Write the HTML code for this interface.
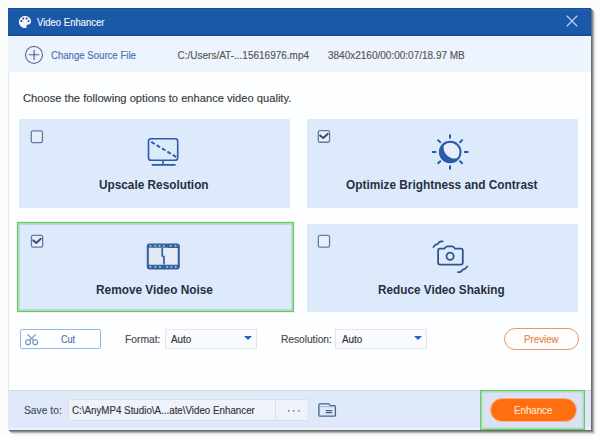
<!DOCTYPE html>
<html><head><meta charset="utf-8">
<style>
*{box-sizing:border-box;margin:0;padding:0}
html,body{width:600px;height:438px;overflow:hidden;background:#fcfcfb;font-family:"Liberation Sans",sans-serif}
.a{position:absolute}
.t{position:absolute;white-space:nowrap;transform-origin:0 0;line-height:1;-webkit-text-stroke:0.15px currentColor}
#win{position:absolute;left:8px;top:8px;width:583px;height:422px;background:#fdfeff;box-shadow:1px 1px 0 #6c6c6c,2px 2px 0 #8c8c8c,3px 3px 1px #b8b8b8,4px 4px 2px #dedede;border-left:1px solid #e8e8e8}
#title{left:8px;top:8px;width:583px;height:28px;background:linear-gradient(#234c88 0,#234c88 1px,#1860b2 1px,#1a5aab 4px,#1a58a8 8px,#1a58a8 26px,#134893 27px,#134893 28px)}
#src{left:8px;top:36px;width:583px;height:35.7px;background:#eef4fd}
.card{position:absolute;background:#ddeafc;width:271px;height:89px}
.chk{position:absolute;width:12px;height:12px;border:1.5px solid #6f8cc4;border-radius:1.5px;background:#e9f0fc}
.cap{position:absolute;transform-origin:0 0;font-weight:bold;font-size:12px;color:#27303f;white-space:nowrap;line-height:1}
.lbl{color:#444;font-size:11px}
.dd{position:absolute;height:20px;background:linear-gradient(#fbfcfe,#f5f8fc);border:1px solid #e1e6ed;box-shadow:inset 0 0 0 1px #f9fbfd}
.tri{position:absolute;width:0;height:0;border-left:4.2px solid transparent;border-right:4.2px solid transparent;border-top:4.3px solid #2462bf}
#foot{left:8px;top:390px;width:583px;height:40px;background:linear-gradient(#cfd8e4 0,#cfd8e4 1px,#e0e9f8 1px,#dfe9f9 38px,#e8f2fc 38px)}
</style></head><body>
<div id="win"></div>
<div class="a" id="title"></div>
<!-- palette icon -->
<svg class="a" style="left:14px;top:12px" width="22" height="20" viewBox="14 12 22 20">
<path d="M25 16C28.6 16 31.1 18.5 31.1 21.6C31.1 23.6 29.8 24.6 28.2 24.4C27 24.3 26.2 25 26.6 26.2C27 27.3 26.3 28 25 28C21.6 28 18.9 25.3 18.9 22C18.9 18.7 21.6 16 25 16Z" fill="#f3f6fb"/>
<g fill="#203f78"><circle cx="21.4" cy="21" r="1"/><circle cx="23.3" cy="18.5" r="1"/><circle cx="26.6" cy="18.5" r="1"/><circle cx="28.5" cy="21" r="1"/></g>
</svg>
<div class="t" style="left:37px;top:17.5px;font-size:10px;color:#f2f6fc;transform:scaleX(0.951)">Video Enhancer</div>
<svg class="a" style="left:566px;top:15px" width="12" height="12" viewBox="0 0 12 12"><path d="M0.8 0.8L11.2 11.2M11.2 0.8L0.8 11.2" stroke="#b8d0f2" stroke-width="1.25"/></svg>

<div class="a" id="src"></div>
<svg class="a" style="left:24px;top:45px" width="20" height="20" viewBox="0 0 20 20"><circle cx="10" cy="9.9" r="8.5" fill="none" stroke="#566e98" stroke-width="1.2"/><path d="M10.1 4.9v10.1M4.9 9.7h10.3" stroke="#4a6290" stroke-width="1.15"/></svg>
<div class="t" style="left:51.3px;top:51px;font-size:10px;color:#4a6fae;transform:scaleX(0.96)">Change Source File</div>
<div class="t" style="left:177.5px;top:51px;font-size:10px;color:#555;transform:scaleX(1.0)">C:/Users/AT-...15616976.mp4</div>
<div class="t" style="left:328px;top:51px;font-size:10px;color:#555;transform:scaleX(1.0)">3840x2160/00:00:07/18.97 MB</div>

<div class="t" style="left:23px;top:92.8px;font-size:11.5px;color:#3a3a3a;transform:scaleX(0.97)">Choose the following options to enhance video quality.</div>

<!-- cards -->
<div class="card" style="left:19px;top:119px"></div>
<div class="card" style="left:307px;top:119px"></div>
<div class="card" style="left:19px;top:224px;height:86px;width:273px"></div>
<div class="a" style="left:17px;top:222px;width:277px;height:90px;border:1px solid #6fc46f;box-shadow:inset 0 0 0 1px #98ec98,inset 0 0 0 2px #c6d0e6,0 0 0 1px #f1f1f1"></div>
<div class="card" style="left:307px;top:224px;height:88px"></div>

<svg class="a" style="left:0;top:0" width="600" height="438" viewBox="0 0 600 438" pointer-events="none"><rect x="31.25" y="130.95" width="11.2" height="11.7" rx="1.6" fill="#e9eff9" stroke="#6a77a0" stroke-width="1.3"/><rect x="318.35" y="130.55" width="11.2" height="11.7" rx="1.6" fill="#e9eff9" stroke="#6a77a0" stroke-width="1.3"/><path d="M320.10 135.40L323.20 138.00L327.70 133.90" fill="none" stroke="#3a4d80" stroke-width="2" stroke-linecap="round" stroke-linejoin="round"/><rect x="31.45" y="235.45" width="11.2" height="11.7" rx="1.6" fill="#e9eff9" stroke="#6a77a0" stroke-width="1.3"/><path d="M33.20 240.30L36.30 242.90L40.80 238.80" fill="none" stroke="#3a4d80" stroke-width="2" stroke-linecap="round" stroke-linejoin="round"/><rect x="318.35" y="235.45" width="11.2" height="11.7" rx="1.6" fill="#e9eff9" stroke="#6a77a0" stroke-width="1.3"/></svg>
<!-- monitor icon -->
<svg class="a" style="left:140px;top:130px" width="45" height="40" viewBox="140 130 45 40">
<rect x="148.5" y="138.7" width="29.2" height="21.6" rx="2.6" fill="none" stroke="#2b5ba8" stroke-width="1.6"/>
<path d="M151.3 141.9L176.2 157" stroke="#2b5ba8" stroke-width="1.9" stroke-dasharray="4 2.27"/>
<path d="M163 160.5v4M151.8 164.9H175.6" stroke="#2b5ba8" stroke-width="1.6"/>
</svg>
<div class="cap" style="left:99.4px;top:179px;transform:scaleX(0.984)">Upscale Resolution</div>

<!-- sun icon -->
<svg class="a" style="left:425px;top:127px" width="50" height="50" viewBox="425 127 50 50">
<defs><clipPath id="ci"><circle cx="450.2" cy="152" r="9.3"/></clipPath></defs>
<g stroke="#2b5ba8" stroke-width="2" stroke-linecap="butt">
<path d="M450 134.5v4M450 165.5v4M432 152h4.3M464 152h4.5M437.6 139.6l3.2 3.1M462.7 139.6l-3.2 3.1M437.6 163.8l3.2-3.1M462.7 163.8l-3.2-3.1"/>
</g>
<circle cx="450.2" cy="152" r="11.3" fill="#2b5ba8"/>
<circle cx="455" cy="147.2" r="11.4" fill="#e6eefb" clip-path="url(#ci)"/>
</svg>
<div class="cap" style="left:346px;top:178.8px;transform:scaleX(0.987)">Optimize Brightness and Contrast</div>

<!-- film icon -->
<svg class="a" style="left:140px;top:238px" width="45" height="36" viewBox="140 238 45 36">
<rect x="148.5" y="247" width="29.5" height="18" fill="#e4e8f0"/>
<rect x="163.5" y="247" width="14.5" height="18" fill="#e7edf8"/>
<g fill="#33609f">
<path d="M146.8 246a2.6 2.6 0 0 1 2.6-2.6H170v4.3H146.8z"/>
<path d="M168.3 246a2.6 2.6 0 0 1 2.6-2.6h6.3a2.6 2.6 0 0 1 2.6 2.6v1.9h-11.5z"/>
<rect x="146.8" y="247" width="2" height="19"/>
<rect x="177.7" y="247" width="2.1" height="19"/>
<path d="M146.8 264.8H179.8v2a2.6 2.6 0 0 1-2.6 2.6H149.4a2.6 2.6 0 0 1-2.6-2.6z"/>
<path d="M161.4 248h1.7v7.6l1.7 0.4v8.6h-1.7v-7.6l-1.7-0.4z"/>
</g>
<g fill="#dbe5f6">
<rect x="149.4" y="245.2" width="2" height="1.3" rx=".6"/><rect x="154.3" y="245.2" width="2" height="1.3" rx=".6"/><rect x="158.5" y="245.2" width="2" height="1.3" rx=".6"/><rect x="162.8" y="245.2" width="2" height="1.3" rx=".6"/><rect x="169.6" y="245.2" width="2" height="1.3" rx=".6"/><rect x="174.6" y="245.2" width="2" height="1.3" rx=".6"/>
<rect x="149.4" y="266.2" width="2" height="1.3" rx=".6"/><rect x="154.3" y="266.2" width="2" height="1.3" rx=".6"/><rect x="159" y="266.2" width="2" height="1.3" rx=".6"/><rect x="166" y="266.2" width="2" height="1.3" rx=".6"/><rect x="170.3" y="266.2" width="2" height="1.3" rx=".6"/><rect x="174.6" y="266.2" width="2" height="1.3" rx=".6"/>
</g>
</svg>
<div class="cap" style="left:96.2px;top:283.8px;transform:scaleX(0.987)">Remove Video Noise</div>

<!-- camera icon -->
<svg class="a" style="left:425px;top:235px" width="50" height="42" viewBox="425 235 50 42">
<g fill="none" stroke="#31558f" stroke-width="1.8" stroke-linecap="round" stroke-linejoin="round">
<path d="M441 248.6h3.4c.8-1.6 1.6-2.3 3-2.3h4.6c1.4 0 2.2.7 3 2.3h5.8c1.3 0 2 .8 2 2v11.9c0 1.3-.7 2.1-2 2.1H440.1c-1.3 0-2-.8-2-2.1v-11.9c0-1.2.7-2 2-2z"/>
<circle cx="450.1" cy="256.2" r="3.6"/>
<path d="M433.4 247L435.4 244.9Q436.2 244.2 437.2 244.2Q437.9 244.1 438.9 242.6Q439.7 241.6 440.8 241.5L442.7 241.4"/>
<path d="M467.3 266.5L465.3 268.6Q464.5 269.3 463.5 269.3Q462.8 269.4 461.8 270.9Q461 271.9 459.9 272L458 272.1"/>
</g>
</svg>
<div class="cap" style="left:378px;top:283.8px;transform:scaleX(0.98)">Reduce Video Shaking</div>

<!-- controls row -->
<div class="a" style="left:19.5px;top:329px;width:81.5px;height:20px;border:1px solid #93bbe6;border-radius:2px;background:#fdfeff"></div>
<svg class="a" style="left:20px;top:330px" width="22" height="18" viewBox="20 330 22 18"><g fill="none" stroke="#6d8ebb" stroke-width="1.1"><circle cx="28.1" cy="342.2" r="2.4"/><circle cx="35.2" cy="342.2" r="2.4"/><path d="M29.6 340.3L35.8 334.4M33.7 340.3L27.4 334.4"/></g></svg>
<div class="t" style="left:60.8px;top:334.8px;font-size:10px;color:#4d6fa8;transform:scaleX(0.906)">Cut</div>

<div class="t" style="left:124.5px;top:334.8px;font-size:10px;color:#4a4a4a;transform:scaleX(1.03)">Format:</div>
<div class="dd" style="left:165px;top:328.8px;width:92px"></div>
<div class="t" style="left:171.3px;top:334.8px;font-size:10px;color:#333;transform:scaleX(0.985)">Auto</div>
<div class="tri" style="left:244px;top:336.3px"></div>

<div class="t" style="left:280.8px;top:334.8px;font-size:10px;color:#4a4a4a;transform:scaleX(1.015)">Resolution:</div>
<div class="dd" style="left:335px;top:328.8px;width:92px"></div>
<div class="t" style="left:342.2px;top:334.8px;font-size:10px;color:#333;transform:scaleX(0.985)">Auto</div>
<div class="tri" style="left:414.3px;top:336.3px"></div>

<div class="a" style="left:504px;top:328px;width:75px;height:22px;border:1.2px solid #eb9a66;border-radius:11px;background:#fffdfb"></div>
<div class="t" style="left:523.8px;top:335px;font-size:10px;color:#e8864a;transform:scaleX(0.974)">Preview</div>

<!-- footer -->
<div class="a" id="foot"></div>
<div class="t" style="left:23.5px;top:405.5px;font-size:10px;color:#4a4f58;transform:scaleX(1.029)">Save to:</div>
<div class="a" style="left:68px;top:399px;width:241px;height:22px;background:#eef3fb;border:1px solid #d6dfeb;border-radius:2px"></div>
<div class="a" style="left:275px;top:400px;width:1px;height:20px;background:#d6dfeb"></div>
<div class="t" style="left:72.4px;top:405.6px;font-size:10px;color:#333;transform:scaleX(0.977)">C:\AnyMP4 Studio\A...ate\Video Enhancer</div>
<svg class="a" style="left:286px;top:408px" width="16" height="6" viewBox="0 0 16 6"><g fill="#6a707a"><circle cx="2.6" cy="2.8" r="0.9"/><circle cx="7.7" cy="2.8" r="0.9"/><circle cx="12.8" cy="2.8" r="0.9"/></g></svg>
<svg class="a" style="left:310px;top:396px" width="32" height="28" viewBox="310 396 32 28"><g fill="none" stroke="#456291" stroke-width="1.3"><path d="M318.9 415V405Q318.9 403.9 320 403.9H328.8L330.6 405.6H334.3Q335.4 405.6 335.4 406.7V415Q335.4 416.2 334.3 416.2H320Q318.9 416.2 318.9 415z"/><path d="M325.8 410.7H332.2M325.8 412.7H332.2" stroke-width="1.2"/></g><path d="M319.6 406.7H334.8" stroke="#8fa5c9" stroke-width="0.8"/></svg>

<div class="a" style="left:480px;top:390px;width:105px;height:40px;border:1px solid #6fc46f;box-shadow:inset 0 0 0 1px #98ec98,inset 0 0 0 2px #cfd4ea;background:#d9e2f4"></div>
<div class="a" style="left:490px;top:398px;width:87px;height:24px;background:#ff6e10;border:1px solid #ffb27c;border-radius:12px"></div>
<div class="t" style="left:513.6px;top:405.7px;font-size:10px;color:#fde6d4;transform:scaleX(0.971)">Enhance</div>
</body></html>
